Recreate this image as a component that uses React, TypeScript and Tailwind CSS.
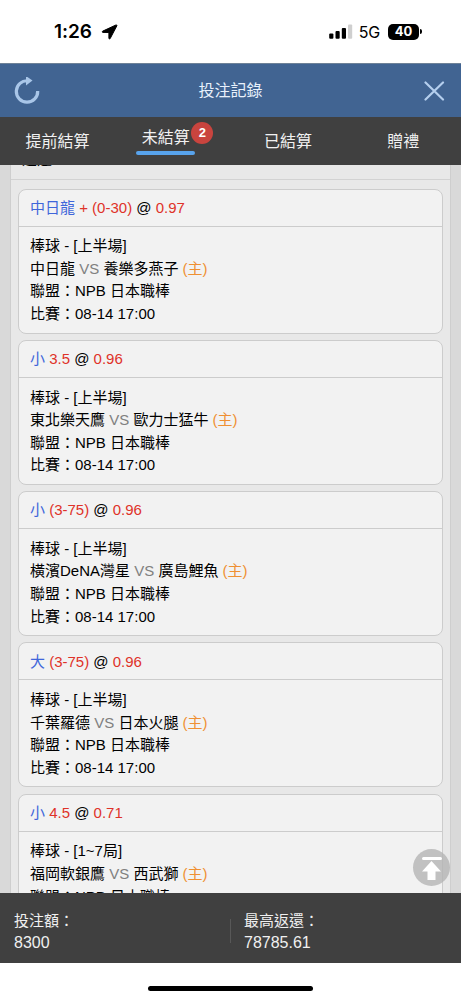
import React from 'react';

type Bet = { pick: string; odds: string; rate: string; part: string; away: string; home: string };

const bets: Bet[] = [
  { pick: '中日龍', odds: '+ (0-30)', rate: '0.97', part: '上半場', away: '中日龍', home: '養樂多燕子' },
  { pick: '小', odds: '3.5', rate: '0.96', part: '上半場', away: '東北樂天鷹', home: '歐力士猛牛' },
  { pick: '小', odds: '(3-75)', rate: '0.96', part: '上半場', away: '橫濱DeNA灣星', home: '廣島鯉魚' },
  { pick: '大', odds: '(3-75)', rate: '0.96', part: '上半場', away: '千葉羅德', home: '日本火腿' },
  { pick: '小', odds: '4.5', rate: '0.71', part: '1~7局', away: '福岡軟銀鷹', home: '西武獅' },
];

function StatusBar() {
  return (
    <div className="flex h-[63px] shrink-0 items-center bg-white pl-[54px] pr-[39px] font-['Inter'] text-black">
      <span className="w-[39px] pt-px text-[19px] font-semibold tracking-[-0.1px]">1:26</span>
      <svg className="ml-[8px]" width="17" height="16" viewBox="0 0 17 16">
        <path
          d="M14.900 1 1.800 7.100C.900 7.600 1.100 8.400 2 8.400L7.900 8.500V14.300C8 15.100 8.800 15.200 9.200 14.500L15.800 1.900C16.100 1.200 15.600.700 14.900 1Z"
          stroke="black"
          strokeWidth="1"
        />
      </svg>
      <svg className="ml-auto" width="24" height="16" viewBox="0 0 24 16">
        <rect x="0.2" y="9.500" width="4.200" height="5.300" rx="1" />
        <rect x="6.500" y="7" width="4.200" height="7.800" rx="1" />
        <rect x="12.800" y="4" width="4.200" height="10.800" rx="1" />
        <rect x="19" y="0.500" width="4.200" height="14.300" rx="1" fill="#cfcfcf" />
      </svg>
      <span className="ml-[6px] pt-px text-[16px] font-normal tracking-[-0.2px]">5G</span>
      <span className="ml-[8px] flex h-4 w-[31px] items-center justify-center rounded-[5px] bg-black text-[13px] font-bold text-white">
        40
      </span>
      <span className="ml-px h-[5px] w-[2px] rounded-r bg-black" />
    </div>
  );
}

function BetCard({ bet }: { bet: Bet }) {
  return (
    <div className="h-[145px] shrink-0 rounded-[8px] border border-[#cccccc] bg-[#f2f2f2] text-[15px] text-black">
      <div className="flex h-[37px] items-center whitespace-pre border-b border-[#cccccc] pl-[11px] pt-px">
        <span className="text-[#3f66da]">{bet.pick}</span>
        <span className="text-[#df3229]"> {bet.odds}</span>
        <span> @ </span>
        <span className="text-[#df3229]">{bet.rate}</span>
      </div>
      <div className="pl-[11px] pt-[8.8px] leading-[22.6px]">
        <p>棒球 - [{bet.part}]</p>
        <p>
          {bet.away} <span className="text-[#808080]">VS</span> {bet.home} <span className="text-[#ef9033]">(主)</span>
        </p>
        <p>聯盟：NPB 日本職棒</p>
        <p>比賽：08-14 17:00</p>
      </div>
    </div>
  );
}

export default function App() {
  return (
    <div className="relative flex h-[1000px] w-[461px] flex-col overflow-hidden bg-white font-['Liberation_Sans','Noto_Sans_CJK_TC',sans-serif]">
      <StatusBar />
      <header className="flex h-[54px] shrink-0 items-center justify-between border-t border-[#6e8298] bg-[#416492] px-[14px]">
        <svg width="26" height="28" viewBox="0 0 26 28" fill="none">
          <path d="M14 3.800A10.700 10.700 0 1 0 23.700 14" stroke="#a9c6e8" strokeWidth="3.2" />
          <path d="M12 -1 18.500 3.500 12 8.500Z" fill="#a9c6e8" />
        </svg>
        <h1 className="text-[16px] text-[#e8f1fc]">投注記錄</h1>
        <svg width="26" height="20" viewBox="0 0 26 20" fill="none" stroke="#b5cfee" strokeWidth="2.2" strokeLinecap="round">
          <path d="M4.500 1.500 22 18.500M22 1.500 4.500 18.500" />
        </svg>
      </header>
      <nav className="grid h-[48px] shrink-0 grid-cols-4 bg-[#404040] text-[16px] leading-6 text-[#f1f1f1]">
        <span className="pt-[13px] text-center">提前結算</span>
        <span className="relative flex flex-col items-center pt-[9px]">
          <span className="relative -left-[7px]">未結算</span>
          <span className="relative -left-[7px] mt-px h-[4px] w-[59px] rounded-full bg-[#58a3ec]" />
          <span className="absolute left-[76px] top-[5px] flex h-[22px] w-[22px] items-center justify-center rounded-full bg-[#c9443e] text-[13px] font-bold text-white">
            2
          </span>
        </span>
        <span className="pt-[13px] text-center">已結算</span>
        <span className="pt-[13px] text-center">贈禮</span>
      </nav>
      <main className="min-h-0 flex-1 overflow-hidden bg-[#d9d9d9] pl-[10px] pr-[10px]">
        <div className="h-full overflow-hidden border-x border-[#cecece] bg-[#e8e8e8]">
          <div className="flex h-[14.500px] items-start overflow-hidden border-b border-[#d2d2d2] pl-[11px]">
            <span className="-mt-[14px] text-[14.9px] leading-[17px]">返還：$</span>
          </div>
          <div className="flex flex-col gap-[6.3px] px-[7px] pt-[9px]">
            {bets.map((bet) => (
              <BetCard key={bet.away} bet={bet} />
            ))}
          </div>
        </div>
      </main>
      <footer className="flex h-[70px] shrink-0 items-center bg-[#404040] text-[#f0f0f0]">
        <div className="flex w-[231px] items-center justify-between pl-[14px] pt-[5px]">
          <div className="pt-[2px]">
            <p className="text-[15px] leading-[22px]">投注額：</p>
            <p className="text-[16px] leading-[22px]">8300</p>
          </div>
          <span className="h-6 w-px bg-[#585858]" />
        </div>
        <div className="pl-[13px] pt-[7px]">
          <p className="text-[15px] leading-[22px]">最高返還：</p>
          <p className="text-[16px] leading-[22px]">78785.61</p>
        </div>
      </footer>
      <div className="flex h-[37px] shrink-0 justify-center bg-white pt-[23px]">
        <span className="h-[5px] w-[165px] rounded-full bg-black" />
      </div>
      <button aria-label="回到頂部" className="absolute left-[413px] top-[849px] h-[37px] w-[37px] rounded-full bg-[#b4b4b4]/80">
        <svg width="37" height="37" viewBox="0 0 37 37" fill="white">
          <rect x="9" y="8" width="20" height="3" rx="1.5" />
          <path d="M18.500 12 28 22.500H22.500V31h-8v-8.500H9Z" />
        </svg>
      </button>
    </div>
  );
}
